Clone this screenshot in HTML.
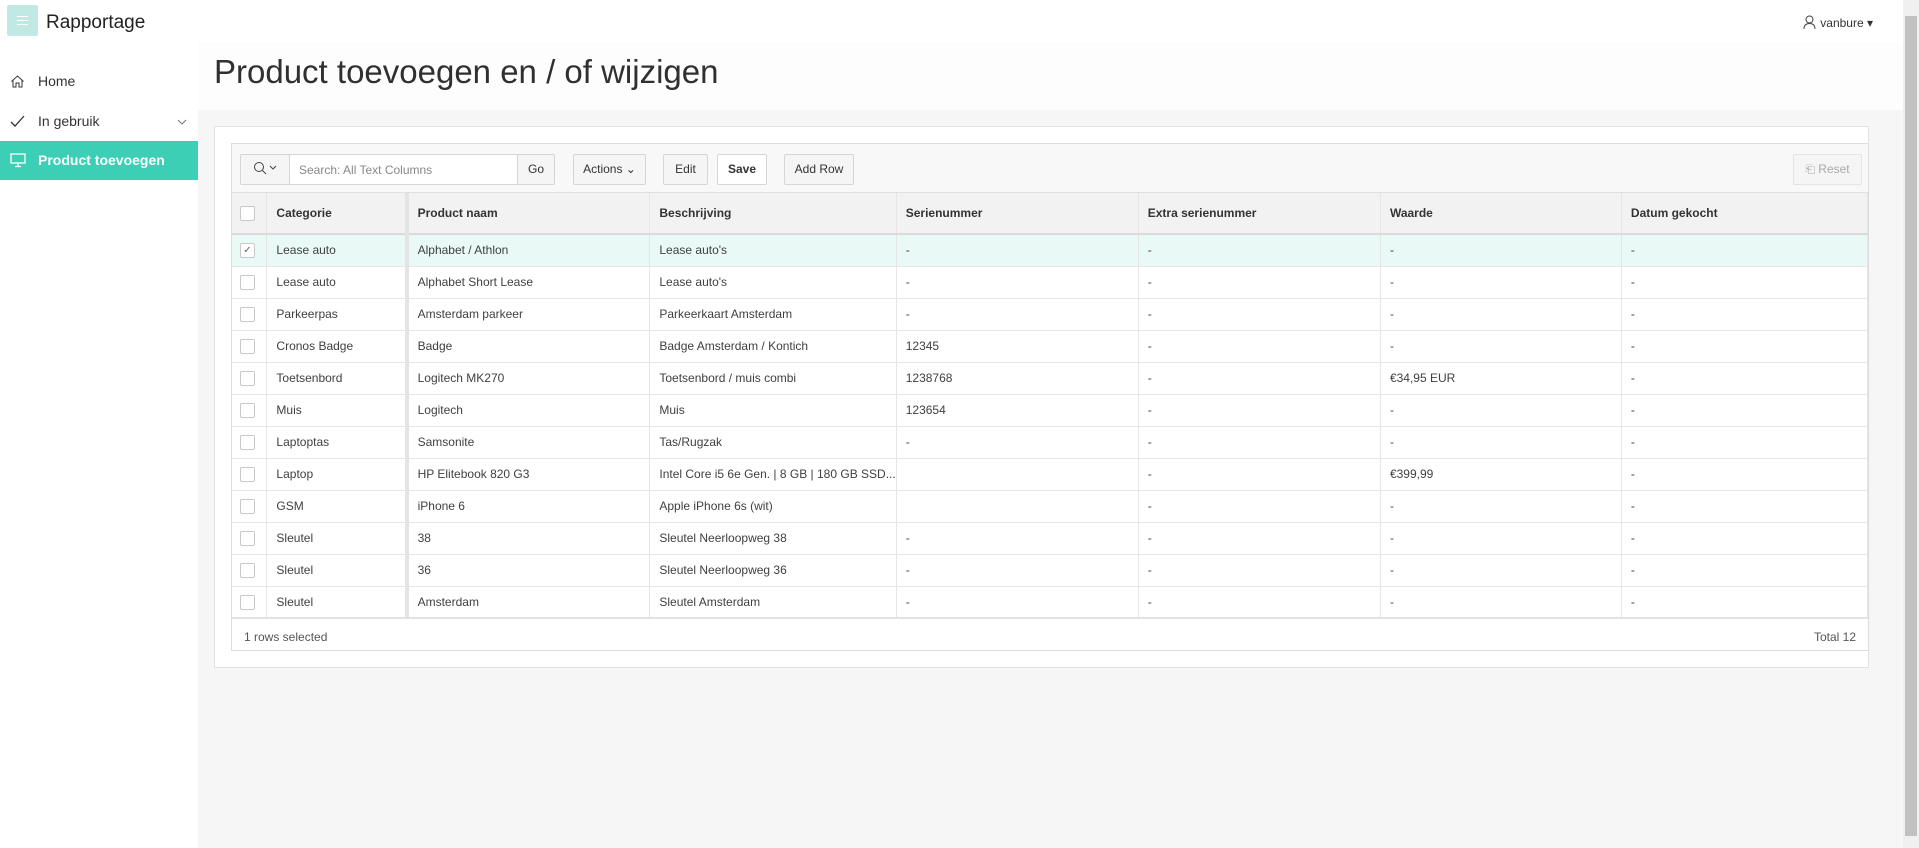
<!DOCTYPE html>
<html><head><meta charset="utf-8"><style>
*{box-sizing:border-box;margin:0;padding:0}
body{width:1919px;height:848px;overflow:hidden;background:#f6f6f6;font-family:"Liberation Sans",sans-serif;color:#404040;position:relative;font-size:12px}
.top{position:absolute;left:0;top:0;width:1903px;height:42px;background:#fff}
.ham{position:absolute;left:7px;top:5px;width:31px;height:31px;background:#bfe9e2;border-radius:2px}
.ham i{position:absolute;left:10px;width:11px;height:1px;background:#fff}
.brand{position:absolute;left:46px;top:12px;font-size:19px;color:#222}
.user{position:absolute;right:30px;top:15px;font-size:12px;color:#333}
.side{position:absolute;left:0;top:42px;width:198px;height:806px;background:#fff}
.nav{position:absolute;left:0;width:198px;height:39px;font-size:14px;line-height:39px;padding-left:38px;color:#333}
.nav.act{background:#3ccfb6;color:#fff;font-weight:bold}
.nav svg{position:absolute;left:10px;top:12px}
.titlebar{position:absolute;left:198px;top:42px;width:1705px;height:68px;background:#fdfdfd}
h1{position:absolute;left:214px;top:53px;font-size:33px;font-weight:normal;color:#303030}
.scroll{position:absolute;right:0;top:0;width:16px;height:848px;background:#f0f0f0}
.scroll div{position:absolute;left:2px;top:16px;width:12px;height:820px;background:#c1c1c1}
.panel{position:absolute;left:214px;top:126px;width:1655px;height:542px;background:#fff;border:1px solid #e2e2e2}
.grid{position:absolute;left:231px;top:143px;width:1638px;height:508px;border:1px solid #dcdcdc;background:#fff}
.tb{position:absolute;left:0;top:0;width:100%;height:49px;background:#f8f8f8;border-bottom:1px solid #e0e0e0}
.b{position:absolute;top:10px;height:31px;border:1px solid #d6d6d6;background:#f5f5f5;font-size:12px;line-height:29px;text-align:center;color:#333;border-radius:2px}
table{position:absolute;left:0;top:49px;border-collapse:collapse;table-layout:fixed}
td,th{height:32px;border-bottom:1px solid #e6e6e6;border-right:1px solid #e6e6e6;padding-left:9px;text-align:left;white-space:nowrap;overflow:hidden;font-size:12px}
th{height:41px;background:#f2f2f2;font-weight:bold;color:#333;border-bottom:2px solid #dadada}
tr.sel td{background:#e8f9f6}
.cb{display:inline-block;width:15px;height:15px;border:1px solid #c8c8c8;background:#fff;vertical-align:middle;position:relative;border-radius:2px}
td.c,th.c{padding-left:8px}
td.sep,th.sep{border-right:4px solid #e4e4e4}
.foot{position:absolute;left:12px;font-size:12px;color:#555}
.tot{position:absolute;right:12px;font-size:12px;color:#555}
</style></head><body>
<div class="top"><div class="ham"><i style="top:11px"></i><i style="top:15px"></i><i style="top:19px"></i></div><div class="brand">Rapportage</div>
<div class="user"><svg width="13" height="14" viewBox="0 0 13 14" style="vertical-align:-2px;margin-right:4px"><circle cx="6.5" cy="4.5" r="3.5" fill="none" stroke="#444"/><path d="M1 14c0-4 2.5-5.5 5.5-5.5S12 10 12 14" fill="none" stroke="#444"/></svg>vanbure ▾</div></div>
<div class="side">
<div class="nav" style="top:20px"><svg width="15" height="15" viewBox="0 0 15 15"><path d="M1.5 7.5L7.5 2l6 5.5M3 6.5V13h3V9h3v4h3V6.5" fill="none" stroke="#333"/></svg>Home</div>
<div class="nav" style="top:60px"><svg width="15" height="15" viewBox="0 0 15 15"><path d="M1 8l4 4L14 2" fill="none" stroke="#333" stroke-width="1.3"/></svg>In gebruik<svg width="10" height="6" viewBox="0 0 10 6" style="left:177px;top:17px"><path d="M1 1l4 4 4-4" fill="none" stroke="#777"/></svg></div>
<div class="nav act" style="top:99px"><svg width="16" height="15" viewBox="0 0 16 15"><rect x="1" y="1" width="14" height="9" fill="none" stroke="#fff" stroke-width="1.3"/><path d="M8 10v3M5 13.5h6" stroke="#fff" stroke-width="1.3"/></svg>Product toevoegen</div>
</div>
<div class="titlebar"></div>
<h1>Product toevoegen en / of wijzigen</h1>
<div class="panel"></div>
<div class="grid">
<div class="tb">
<div class="b" style="left:8px;width:315px;background:#fff"></div>
<div class="b" style="left:8px;width:50px"><svg width="24" height="14" viewBox="0 0 24 14" style="vertical-align:-2px"><circle cx="6" cy="6" r="4.5" fill="none" stroke="#444"/><path d="M9.5 9.5l3.5 3.5M17 5l3 3 3-3" fill="none" stroke="#444"/></svg></div>
<div style="position:absolute;left:67px;top:19px;color:#888;font-size:12px">Search: All Text Columns</div>
<div class="b" style="left:285px;width:38px">Go</div>
<div class="b" style="left:341px;width:73px">Actions ⌄</div>
<div class="b" style="left:431px;width:45px">Edit</div>
<div class="b" style="left:485px;width:50px;background:#fff;font-weight:bold">Save</div>
<div class="b" style="left:552px;width:70px">Add Row</div>
<div class="b" style="left:1561px;width:69px;color:#aaa;border-color:#e4e4e4">⎗ Reset</div>
</div>
<table>
<colgroup><col style="width:35px"><col style="width:140px"><col style="width:244px"><col style="width:242px"><col style="width:243px"><col style="width:243px"><col style="width:242px"><col style="width:247px"></colgroup>
<tr><th class="c"><span class="cb"></span></th><th class="sep">Categorie</th><th>Product naam</th><th>Beschrijving</th><th>Serienummer</th><th>Extra serienummer</th><th>Waarde</th><th>Datum gekocht</th></tr>
<tr class="sel"><td class="c"><span class="cb" style="font-size:10px;line-height:13px;text-align:center;color:#666">✓</span></td><td class="sep">Lease auto</td><td>Alphabet / Athlon</td><td>Lease auto's</td><td>-</td><td>-</td><td>-</td><td>-</td></tr>
<tr><td class="c"><span class="cb"></span></td><td class="sep">Lease auto</td><td>Alphabet Short Lease</td><td>Lease auto's</td><td>-</td><td>-</td><td>-</td><td>-</td></tr>
<tr><td class="c"><span class="cb"></span></td><td class="sep">Parkeerpas</td><td>Amsterdam parkeer</td><td>Parkeerkaart Amsterdam</td><td>-</td><td>-</td><td>-</td><td>-</td></tr>
<tr><td class="c"><span class="cb"></span></td><td class="sep">Cronos Badge</td><td>Badge</td><td>Badge Amsterdam / Kontich</td><td>12345</td><td>-</td><td>-</td><td>-</td></tr>
<tr><td class="c"><span class="cb"></span></td><td class="sep">Toetsenbord</td><td>Logitech MK270</td><td>Toetsenbord / muis combi</td><td>1238768</td><td>-</td><td>€34,95 EUR</td><td>-</td></tr>
<tr><td class="c"><span class="cb"></span></td><td class="sep">Muis</td><td>Logitech</td><td>Muis</td><td>123654</td><td>-</td><td>-</td><td>-</td></tr>
<tr><td class="c"><span class="cb"></span></td><td class="sep">Laptoptas</td><td>Samsonite</td><td>Tas/Rugzak</td><td>-</td><td>-</td><td>-</td><td>-</td></tr>
<tr><td class="c"><span class="cb"></span></td><td class="sep">Laptop</td><td>HP Elitebook 820 G3</td><td>Intel Core i5 6e Gen. | 8 GB | 180 GB SSD...</td><td></td><td>-</td><td>€399,99</td><td>-</td></tr>
<tr><td class="c"><span class="cb"></span></td><td class="sep">GSM</td><td>iPhone 6</td><td>Apple iPhone 6s (wit)</td><td></td><td>-</td><td>-</td><td>-</td></tr>
<tr><td class="c"><span class="cb"></span></td><td class="sep">Sleutel</td><td>38</td><td>Sleutel Neerloopweg 38</td><td>-</td><td>-</td><td>-</td><td>-</td></tr>
<tr><td class="c"><span class="cb"></span></td><td class="sep">Sleutel</td><td>36</td><td>Sleutel Neerloopweg 36</td><td>-</td><td>-</td><td>-</td><td>-</td></tr>
<tr><td class="c"><span class="cb"></span></td><td class="sep">Sleutel</td><td>Amsterdam</td><td>Sleutel Amsterdam</td><td>-</td><td>-</td><td>-</td><td>-</td></tr>
</table>
<div style="position:absolute;left:0;top:473px;width:100%;border-top:2px solid #e2e2e2"></div>
<div class="foot" style="top:486px">1 rows selected</div><div class="tot" style="top:486px">Total 12</div>
</div>
<div class="scroll"><div></div></div>
</body></html>
